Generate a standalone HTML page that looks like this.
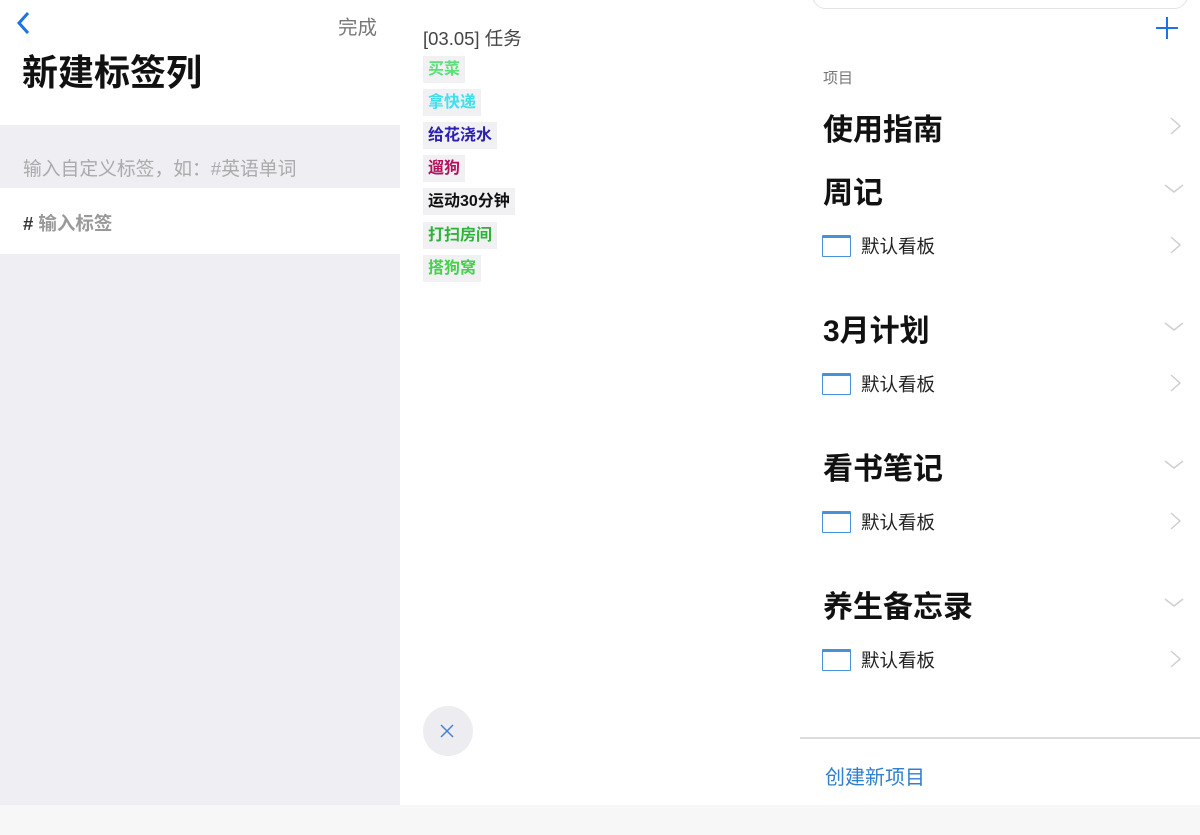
<!DOCTYPE html>
<html><head><meta charset="utf-8"><style>
*{margin:0;padding:0;box-sizing:border-box}
body{width:1200px;height:835px;position:relative;overflow:hidden;background:#fff;font-family:"Liberation Sans","Noto Sans CJK SC",sans-serif}
.a{position:absolute}
.tag{position:absolute;left:423px;height:27px;line-height:27px;padding:0 5px;background:#f1f1f4;font-size:16px;font-weight:bold}
.h{position:absolute;left:823px;font-size:30px;font-weight:bold;color:#111}
.b{position:absolute;left:822px;width:29px;height:22px;border:1.5px solid #4a90d9;border-top-width:3px;border-radius:1px}
.bt{position:absolute;left:861px;font-size:18.5px;color:#222}
.chev{position:absolute;left:1163px;width:22px;height:22px}
</style></head><body>
<div class="a" style="left:0;top:125px;width:400px;height:63px;background:#efeff3"></div>
<div class="a" style="left:0;top:254px;width:400px;height:551px;background:#efeff3"></div>
<div class="a" style="left:0;top:805px;width:1200px;height:30px;background:#f7f7f8"></div>
<svg class="a" style="left:14px;top:10px" width="20" height="26"><path d="M14 3 L5 13 L14 23" stroke="#1a73e8" stroke-width="3" fill="none"/></svg>
<div class="a" style="left:338px;top:11px;font-size:19.5px;color:#777">完成</div>
<div class="a" style="left:22px;top:44px;font-size:36px;font-weight:bold;color:#111">新建标签列</div>
<div class="a" style="left:23px;top:154px;font-size:18.8px;color:#aaa">输入自定义标签，如：#英语单词</div>
<div class="a" style="left:23px;top:210px;font-size:18.5px;font-weight:bold;color:#999"><span style="color:#333">#</span> 输入标签</div>

<div class="a" style="left:423px;top:25px;font-size:18.5px;color:#444">[03.05] 任务</div>
<div class="tag" style="top:56px;color:#5de07a">买菜</div>
<div class="tag" style="top:89px;color:#3ee0ee">拿快递</div>
<div class="tag" style="top:122px;color:#2b1fb0">给花浇水</div>
<div class="tag" style="top:155px;color:#b0135c">遛狗</div>
<div class="tag" style="top:188px;color:#111">运动30分钟</div>
<div class="tag" style="top:222px;color:#2fb23a">打扫房间</div>
<div class="tag" style="top:255px;color:#47d04a">搭狗窝</div>
<div class="a" style="left:423px;top:706px;width:50px;height:50px;border-radius:50%;background:#ececf1"></div>
<svg class="a" style="left:440px;top:724px" width="14" height="14"><path d="M1 1L13 13M13 1L1 13" stroke="#4a7fd0" stroke-width="1.5"/></svg>

<div class="a" style="left:812px;top:-20px;width:376px;height:29px;border:1.5px solid #e3e3e6;border-radius:14px"></div>
<svg class="a" style="left:1155px;top:16px" width="24" height="24"><path d="M12 1V23M1 12H23" stroke="#1a73e8" stroke-width="2"/></svg>
<div class="a" style="left:823px;top:67px;font-size:15px;color:#777">项目</div>
<div class="h" style="top:105px">使用指南</div>
<div class="h" style="top:168px">周记</div>
<div class="h" style="top:306px">3月计划</div>
<div class="h" style="top:444px">看书笔记</div>
<div class="h" style="top:582px">养生备忘录</div>
<svg class="chev" style="top:115px"><path d="M8 3L17 11L8 19" stroke="#cfcfd3" stroke-width="1.5" fill="none"/></svg>
<svg class="chev" style="top:178px"><path d="M2 7L11 14L20 7" stroke="#cfcfd3" stroke-width="1.5" fill="none"/></svg>
<svg class="chev" style="top:316px"><path d="M2 7L11 14L20 7" stroke="#cfcfd3" stroke-width="1.5" fill="none"/></svg>
<svg class="chev" style="top:454px"><path d="M2 7L11 14L20 7" stroke="#cfcfd3" stroke-width="1.5" fill="none"/></svg>
<svg class="chev" style="top:592px"><path d="M2 7L11 14L20 7" stroke="#cfcfd3" stroke-width="1.5" fill="none"/></svg>
<div class="b" style="top:235px"></div><div class="bt" style="top:233px">默认看板</div>
<svg class="chev" style="top:234px"><path d="M8 3L17 11L8 19" stroke="#cfcfd3" stroke-width="1.5" fill="none"/></svg>
<div class="b" style="top:373px"></div><div class="bt" style="top:371px">默认看板</div>
<svg class="chev" style="top:372px"><path d="M8 3L17 11L8 19" stroke="#cfcfd3" stroke-width="1.5" fill="none"/></svg>
<div class="b" style="top:511px"></div><div class="bt" style="top:509px">默认看板</div>
<svg class="chev" style="top:510px"><path d="M8 3L17 11L8 19" stroke="#cfcfd3" stroke-width="1.5" fill="none"/></svg>
<div class="b" style="top:649px"></div><div class="bt" style="top:647px">默认看板</div>
<svg class="chev" style="top:648px"><path d="M8 3L17 11L8 19" stroke="#cfcfd3" stroke-width="1.5" fill="none"/></svg>
<div class="a" style="left:800px;top:737px;width:400px;height:1.5px;background:#dcdce0"></div>
<div class="a" style="left:825px;top:761px;font-size:20px;color:#2f7fd0">创建新项目</div>
</body></html>
